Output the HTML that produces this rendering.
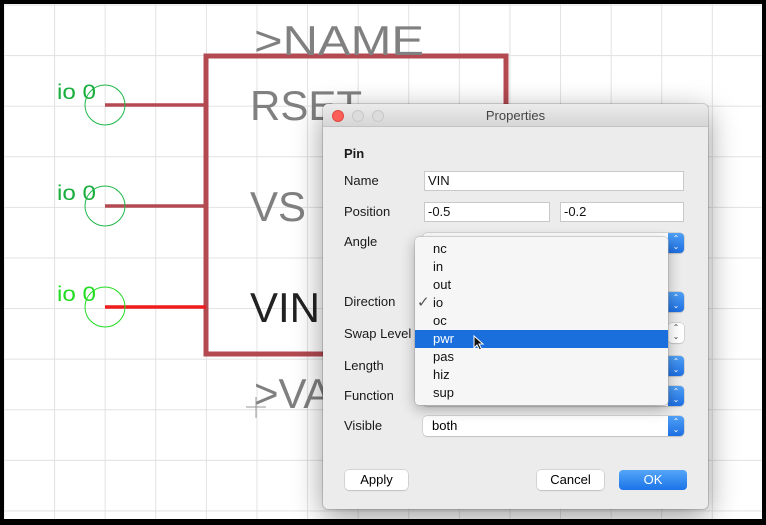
<!DOCTYPE html>
<html><head><style>
body{margin:0;width:766px;height:525px;background:#000;position:relative;overflow:hidden;font-family:"Liberation Sans",sans-serif}
.canvas{position:absolute;left:4px;top:4px;width:758px;height:515px;background:#fff;
background-image:linear-gradient(#e2e2e2 1px,transparent 1px),linear-gradient(90deg,#e2e2e2 1px,transparent 1px);
background-size:50.6px 50.6px;background-position:0 0.5px,-0.5px 0}
.a{position:absolute}
.lbl{position:absolute;font-size:13px;color:#1a1a1a}
.dlg{position:absolute;left:323px;top:104px;width:385px;height:405px;background:#ececec;border-radius:5px;box-shadow:0 8px 30px rgba(0,0,0,.4),0 0 0 1px rgba(0,0,0,.15);overflow:hidden}
.tb{height:22px;background:linear-gradient(#ebebeb,#d6d6d6);border-bottom:1px solid #c4c4c4;text-align:center;font-size:13px;line-height:23px;color:#444}
.dot{position:absolute;top:6px;width:12px;height:12px;border-radius:50%;background:#dcdcdc;border:0.5px solid #c8c8c8;box-sizing:border-box}
.fld{position:absolute;background:#fff;border:1px solid #c9c9c9;box-sizing:border-box;font-size:13px;line-height:17px;padding-left:3px;color:#111}
.pop{position:absolute;background:#fff;border-radius:4px;box-shadow:0 0 0 0.5px #bbb,0 1px 1px rgba(0,0,0,.15);height:20px;font-size:13px;line-height:20px;padding-left:9px;box-sizing:border-box}
.pop .ar{position:absolute;right:0;top:0;width:16px;height:20px;background:linear-gradient(#4fa0f6,#1d6fe3);border-radius:0 4px 4px 0;color:#fff;font-size:8px;line-height:8px;text-align:center;padding-top:2px;box-sizing:border-box}
.btn{position:absolute;height:20px;background:#fff;border-radius:4px;box-shadow:0 0 0 0.5px #bbb,0 1px 1px rgba(0,0,0,.15);font-size:13px;line-height:20px;text-align:center}
.menu{position:absolute;left:415px;top:237px;width:253px;height:168px;background:#f6f6f6;border-radius:4px;box-shadow:0 4px 14px rgba(0,0,0,.3),0 0 0 0.5px #bbb}
.mi{height:18px;line-height:18px;font-size:13px;padding-left:18px;color:#111;position:relative}
</style></head><body>
<div class="canvas"></div>
<svg class="a" style="left:0;top:0" width="766" height="525">
<rect x="206" y="56" width="300" height="298" fill="none" stroke="#b34a52" stroke-width="5"/>
<line x1="105" y1="105" x2="206" y2="105" stroke="#b34a52" stroke-width="3.5"/>
<line x1="105" y1="206" x2="206" y2="206" stroke="#b34a52" stroke-width="3.5"/>
<line x1="105" y1="307" x2="206" y2="307" stroke="#ee1c1c" stroke-width="3.5"/>
<circle cx="105" cy="105" r="20" fill="none" stroke="#1fb84a" stroke-width="1"/>
<circle cx="105" cy="206" r="20" fill="none" stroke="#1fb84a" stroke-width="1"/>
<circle cx="105" cy="307" r="20" fill="none" stroke="#22dd22" stroke-width="1"/>
<g font-family="Liberation Sans" font-size="21" fill="#1aae3c"><text x="57" y="99" textLength="39" lengthAdjust="spacingAndGlyphs">io 0</text><text x="57" y="200" textLength="39" lengthAdjust="spacingAndGlyphs">io 0</text><text x="57" y="301" fill="#22dd22" textLength="39" lengthAdjust="spacingAndGlyphs">io 0</text></g>
<g font-family="Liberation Sans" font-size="42" fill="#808080">
<text x="254" y="55" textLength="170" lengthAdjust="spacingAndGlyphs">&gt;NAME</text><text x="250" y="120" textLength="112" lengthAdjust="spacingAndGlyphs">RSET</text><text x="250" y="221">VS</text><text x="250" y="322" fill="#222">VIN</text><text x="254" y="408">&gt;VA</text></g>
<line x1="246" y1="407" x2="266" y2="407" stroke="#999"/><line x1="256" y1="397" x2="256" y2="418" stroke="#999"/>
</svg>
<div class="dlg">
<div class="tb">Properties</div>
<div class="dot" style="left:9px;background:#fc5f57;border-color:#de4a42"></div>
<div class="dot" style="left:29px"></div><div class="dot" style="left:49px"></div>
</div>
<div class="lbl" style="left:344px;top:146px;font-weight:bold">Pin</div>
<div class="lbl" style="left:344px;top:173px">Name</div>
<div class="lbl" style="left:344px;top:204px">Position</div>
<div class="lbl" style="left:344px;top:234px">Angle</div>
<div class="lbl" style="left:344px;top:294px">Direction</div>
<div class="lbl" style="left:344px;top:326px">Swap Level</div>
<div class="lbl" style="left:344px;top:358px">Length</div>
<div class="lbl" style="left:344px;top:388px">Function</div>
<div class="lbl" style="left:344px;top:418px">Visible</div>
<div class="fld" style="left:424px;top:171px;width:260px;height:20px">VIN</div>
<div class="fld" style="left:424px;top:202px;width:126px;height:20px">-0.5</div>
<div class="fld" style="left:560px;top:202px;width:124px;height:20px">-0.2</div>
<div class="pop" style="left:423px;top:233px;width:261px"><span class="ar">⌃<br>⌄</span></div>
<div class="pop" style="left:423px;top:292px;width:261px"><span class="ar">⌃<br>⌄</span></div>
<div class="pop" style="left:668px;top:323px;width:16px;padding:0;font-size:8px;line-height:9px;text-align:center;color:#444">⌃<br>⌄</div>
<div class="pop" style="left:423px;top:356px;width:261px"><span class="ar">⌃<br>⌄</span></div>
<div class="pop" style="left:423px;top:386px;width:261px"><span class="ar">⌃<br>⌄</span></div>
<div class="pop" style="left:423px;top:416px;width:261px">both<span class="ar">⌃<br>⌄</span></div>
<div class="menu"><div style="height:3px"></div>
<div class="mi">nc</div><div class="mi">in</div><div class="mi">out</div>
<div class="mi"><span style="position:absolute;left:2px;color:#555;font-size:15px">✓</span>io</div>
<div class="mi">oc</div>
<div class="mi" style="background:#1a6fdc;color:#fff">pwr<svg style="position:absolute;left:58px;top:5px" width="12" height="17"><path d="M1 1 L1 13 L4 10 L6.5 15 L8.5 14 L6 9 L10 9 Z" fill="#111" stroke="#fff" stroke-width="1"/></svg></div>
<div class="mi">pas</div><div class="mi">hiz</div><div class="mi">sup</div>
</div>
<div class="btn" style="left:345px;top:470px;width:63px">Apply</div>
<div class="btn" style="left:537px;top:470px;width:67px">Cancel</div>
<div class="btn" style="left:619px;top:470px;width:68px;background:linear-gradient(#55a6f8,#1b73e8);color:#fff;box-shadow:none">OK</div>
</body></html>
